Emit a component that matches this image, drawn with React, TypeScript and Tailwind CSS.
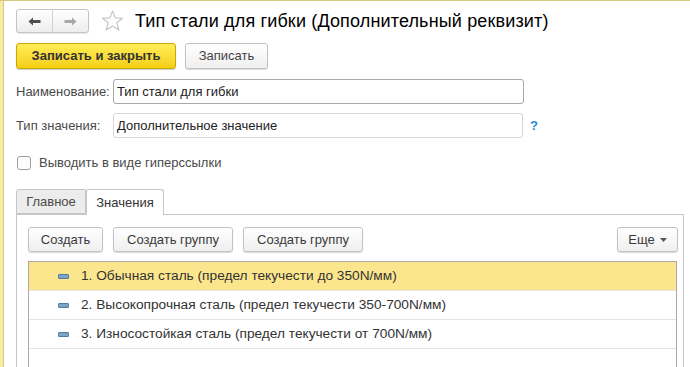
import React from 'react';

const rows = [
  '1. Обычная сталь (предел текучести до 350N/мм)',
  '2. Высокопрочная сталь (предел текучести 350-700N/мм)',
  '3. Износостойкая сталь (предел текучести от 700N/мм)',
];

const Btn: React.FC<{ children: React.ReactNode; className?: string }> = ({ children, className = '' }) => (
  <button
    className={`h-[25px] rounded-[3px] border border-[#c2c2c2] bg-gradient-to-b from-white to-[#efefef] text-[13px] text-[#3a3a3a] shadow-[0_1px_1px_rgba(0,0,0,0.15)] ${className}`}
  >
    {children}
  </button>
);

const App: React.FC = () => {
  return (
    <div
      className="w-[690px] h-[367px] overflow-hidden bg-white border-t border-[#d9c77c] flex"
      style={{ fontFamily: '"Liberation Sans", Arial, sans-serif' }}
    >
      {/* left strip */}
      <div className="w-[3px] bg-[#fbeb9e] shrink-0" />
      <div className="w-px bg-[#cfc6a0] shrink-0" />

      <div className="flex-1 pl-[12px] pt-[8px]">
        {/* Title row */}
        <div className="flex items-center h-[24px]">
          <div className="flex h-[24px] w-[73px] rounded-[3px] border border-[#c4c4c4] bg-gradient-to-b from-white to-[#ededed] shadow-[0_1px_1px_rgba(0,0,0,0.1)]">
            <div className="flex-1 flex items-center justify-center border-r border-[#d0d0d0]">
              <svg width="13" height="9" viewBox="0 0 13 9">
                <path d="M0.5 4.5 L5 0.5 L5 3 L12.5 3 L12.5 6 L5 6 L5 8.5 Z" fill="#4d4d4d" />
              </svg>
            </div>
            <div className="flex-1 flex items-center justify-center">
              <svg width="13" height="9" viewBox="0 0 13 9">
                <path d="M12.5 4.5 L8 0.5 L8 3 L0.5 3 L0.5 6 L8 6 L8 8.5 Z" fill="#a8a8a8" />
              </svg>
            </div>
          </div>
          <svg className="ml-[12px]" width="23" height="22" viewBox="0 0 24 23">
            <path
              d="M12 1.2 L14.8 8.3 L22.5 8.6 L16.5 13.4 L18.6 21 L12 16.7 L5.4 21 L7.5 13.4 L1.5 8.6 L9.2 8.3 Z"
              fill="none"
              stroke="#c4c4c4"
              strokeWidth="1.2"
              strokeLinejoin="round"
            />
          </svg>
          <h1 className="ml-[11px] text-[18px] tracking-[0.15px] leading-none text-black whitespace-nowrap">
            Тип стали для гибки (Дополнительный реквизит)
          </h1>
        </div>

        {/* Command bar */}
        <div className="flex items-center gap-[9px] mt-[10px]">
          <button className="h-[26px] w-[160px] rounded-[3px] border border-[#c9a80a] bg-gradient-to-b from-[#ffed55] to-[#f4cf0b] text-[13px] font-bold text-[#333] shadow-[0_1px_1px_rgba(0,0,0,0.2)]">
            Записать и закрыть
          </button>
          <button className="h-[26px] w-[83px] rounded-[3px] border border-[#c2c2c2] bg-gradient-to-b from-white to-[#efefef] text-[13px] text-[#444] shadow-[0_1px_1px_rgba(0,0,0,0.15)]">
            Записать
          </button>
        </div>

        {/* Fields */}
        <div className="mt-[10px] flex items-center h-[25px]">
          <span className="w-[97px] text-[13px] text-[#4a4a4a]">Наименование:</span>
          <div className="w-[411px] h-[25px] rounded-[3px] border border-[#a8a8a8] flex items-center px-[3px] text-[13px] text-[#222]">
            Тип стали для гибки
          </div>
        </div>
        <div className="mt-[9px] flex items-center h-[25px]">
          <span className="w-[97px] text-[13px] text-[#4a4a4a]">Тип значения:</span>
          <div className="w-[410px] h-[25px] rounded-[3px] border border-[#d6d6d6] flex items-center px-[3px] text-[13px] text-[#222]">
            Дополнительное значение
          </div>
          <span className="ml-[7px] text-[13px] font-bold text-[#2a8ad4]">?</span>
        </div>

        {/* Checkbox */}
        <div className="mt-[18px] flex items-center h-[14px]">
          <div className="w-[14px] h-[14px] ml-[1px] rounded-[3px] border border-[#9c9c9c] bg-white" />
          <span className="ml-[8px] text-[13px] text-[#4a4a4a]">Выводить в виде гиперссылки</span>
        </div>

        {/* Tabs */}
        <div className="mt-[19px] flex items-end h-[25px]">
          <div className="h-[25px] w-[70px] border border-[#c6c6c6] bg-[#ececec] flex items-center justify-center text-[13px] text-[#4a4a4a] rounded-tl-[3px]">
            Главное
          </div>
          <div className="h-[26px] -mb-px w-[78px] border border-b-0 border-[#c6c6c6] bg-white flex items-center justify-center text-[13px] text-[#333] relative z-10 rounded-t-[3px]">
            Значения
          </div>
          <div className="flex-1" />
        </div>

        {/* Tab panel */}
        <div className="w-[668px] h-[200px] border border-[#c6c6c6] border-b-0 pl-[11px] pr-[5px] pt-[12px]">
          <div className="flex items-center gap-[10px]">
            <Btn className="w-[75px]">Создать</Btn>
            <Btn className="w-[120px]">Создать группу</Btn>
            <Btn className="w-[120px]">Создать группу</Btn>
            <div className="flex-1" />
            <Btn className="w-[61px] flex items-center justify-center gap-[5px]">
              <span>Еще</span>
              <svg width="7" height="4" viewBox="0 0 7 4">
                <path d="M0 0 L7 0 L3.5 4 Z" fill="#555" />
              </svg>
            </Btn>
          </div>

          {/* Table */}
          <div className="mt-[9px] w-[649px] h-[120px] border border-[#a9a9a9] border-b-0">
            {rows.map((r, i) => (
              <div
                key={i}
                className={`h-[29px] flex items-center border-b border-[#e4e4e4] ${i === 0 ? 'bg-[#fce68d]' : 'bg-white'}`}
              >
                <div className="ml-[29px] w-[11px] h-[5px] bg-[#7ba4c6] border border-[#557c9c] rounded-[1px]" />
                <span className="ml-[12px] text-[13.7px] text-[#333] whitespace-nowrap">{r}</span>
              </div>
            ))}
          </div>
        </div>
      </div>
    </div>
  );
};

export default App;
